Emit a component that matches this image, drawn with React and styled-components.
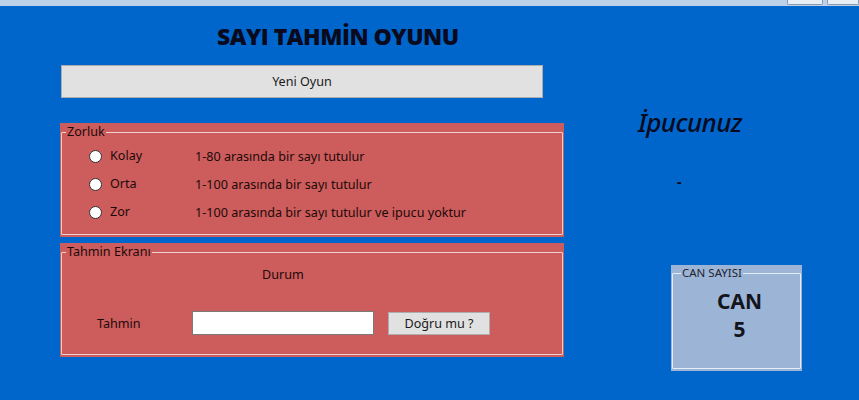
import styled, { createGlobalStyle } from 'styled-components';

const Global = createGlobalStyle`
  html, body { margin: 0; padding: 0; }
  body {
    background: #0066cc;
    font-family: "Noto Sans", "Open Sans", sans-serif;
    color: #1c0a0a;
    overflow: hidden;
  }
`;

const Window = styled.div`
  width: 859px;
  height: 400px;
  background: #0066cc;
`;

const Caption = styled.div`
  height: 6px;
  background: #bcd2ea;
  display: flex;
  justify-content: flex-end;
  gap: 4px;
`;

const CaptionButton = styled.div`
  width: ${p => p.w}px;
  height: 4px;
  border: 1px solid #8a9bb0;
  border-top: none;
  background: #e8eef6;
  border-radius: 0 0 2px 2px;
`;

const Body = styled.div`
  display: flex;
  padding-left: 60px;
`;

const LeftColumn = styled.div`
  width: 504px;
  display: flex;
  flex-direction: column;
`;

const Title = styled.h1`
  margin: 15px 0 0 157px;
  font-family: "Open Sans", sans-serif;
  font-size: 23px;
  font-weight: 800;
  letter-spacing: -0.5px;
  color: #0a0a1e;
  line-height: 30px;
`;

const WideButton = styled.button`
  margin: 14px 0 0 1px;
  width: 482px;
  height: 33px;
  background: #e1e1e1;
  border: 1px solid #adadad;
  font-family: "Noto Sans", sans-serif;
  font-size: 12.6px;
  color: #1a1a1a;
  padding: 0;
`;

const GroupPanel = styled.div`
  margin-top: ${p => p.top}px;
  background: ${p => p.bg};
  padding: 2px 1px 2px 1px;
`;

const Group = styled.fieldset`
  margin: 0;
  border: 1px solid ${p => p.line};
  border-radius: 1px;
  padding: ${p => p.pad};
  min-width: 0;
  height: ${p => p.h}px;
  box-sizing: border-box;
`;

const Legend = styled.legend`
  font-size: ${p => p.size || 12.6}px;
  line-height: 14px;
  padding: 0 1px;
  margin-left: ${p => p.indent || 4}px;
  color: ${p => p.color || '#1c0a0a'};
`;

const OptionGrid = styled.div`
  display: grid;
  grid-template-columns: 13px 77px auto;
  column-gap: 8px;
  grid-auto-rows: 28px;
  align-items: center;
  font-size: 12.6px;
  padding: 3px 0 0 27px;
`;

const Radio = styled.span`
  width: 13px;
  height: 13px;
  box-sizing: border-box;
  border-radius: 50%;
  background: #fff;
  border: 1px solid #333;
`;

const OptionLabel = styled.span`
  margin-top: -2px;
`;

const Status = styled.div`
  font-size: 12.6px;
  padding-left: 200px;
  line-height: 16px;
`;

const GuessRow = styled.div`
  display: flex;
  align-items: center;
  margin-top: 28px;
  font-size: 12.6px;
`;

const GuessLabel = styled.span`
  width: 130px;
  padding-left: 35px;
  box-sizing: border-box;
`;

const GuessInput = styled.input`
  width: 182px;
  height: 24px;
  box-sizing: border-box;
  border: 1px solid #7a7a7a;
  background: #fff;
  margin: 0;
`;

const SmallButton = styled.button`
  margin-left: 14px;
  width: 102px;
  height: 23px;
  background: #e1e1e1;
  border: 1px solid #adadad;
  font-family: "Noto Sans", sans-serif;
  font-size: 12.6px;
  color: #1a1a1a;
  padding: 0;
`;

const RightColumn = styled.div`
  display: flex;
  flex-direction: column;
  padding-left: 74px;
`;

const Hint = styled.div`
  margin-top: 100px;
  font-family: "Noto Sans", sans-serif;
  font-style: italic;
  font-weight: 500;
  font-size: 26px;
  letter-spacing: -0.6px;
  color: #0a0a1e;
  line-height: 32px;
`;

const HintValue = styled.div`
  margin: 36px 0 0 39px;
  font-size: 14px;
  font-weight: 700;
  line-height: 16px;
`;

const LifeBox = styled.div`
  margin: 75px 0 0 33px;
  width: 131px;
  background: #9cb5d6;
  padding: 1px 1px 2px 1px;
  box-sizing: border-box;
`;

const LifeText = styled.div`
  text-align: center;
  font-size: 21px;
  font-weight: 700;
  line-height: 28px;
  color: #14141c;
  padding-left: 6px;
`;

const options = [
  ['Kolay', '1-80 arasında bir sayı tutulur'],
  ['Orta', '1-100 arasında bir sayı tutulur'],
  ['Zor', '1-100 arasında bir sayı tutulur ve ipucu yoktur'],
];

export default function App() {
  return (
    <Window>
      <Global />
      <Caption>
        <CaptionButton w={34} />
        <CaptionButton w={30} />
      </Caption>
      <Body>
        <LeftColumn>
          <Title>SAYI TAHMİN OYUNU</Title>
          <WideButton>Yeni Oyun</WideButton>
          <GroupPanel top={25} bg="#cd5c5c">
            <Group line="#ecd2d2" pad="0" h={110}>
              <Legend>Zorluk</Legend>
              <OptionGrid>
                {options.map(([label, desc]) => [
                  <Radio key={label + 'r'} />,
                  <OptionLabel key={label}>{label}</OptionLabel>,
                  <span key={label + 'd'}>{desc}</span>,
                ])}
              </OptionGrid>
            </Group>
          </GroupPanel>
          <GroupPanel top={6} bg="#cd5c5c">
            <Group line="#ecd2d2" pad="8px 0 0 0" h={110}>
              <Legend>Tahmin Ekranı</Legend>
              <Status>Durum</Status>
              <GuessRow>
                <GuessLabel>Tahmin</GuessLabel>
                <GuessInput />
                <SmallButton>Doğru mu ?</SmallButton>
              </GuessRow>
            </Group>
          </GroupPanel>
        </LeftColumn>
        <RightColumn>
          <Hint>İpucunuz</Hint>
          <HintValue>-</HintValue>
          <LifeBox>
            <Group line="#e4ecf5" pad="7px 0 0 0" h={103}>
              <Legend size={11.5} indent={8} color="#1e2430">CAN SAYISI</Legend>
              <LifeText>CAN</LifeText>
              <LifeText>5</LifeText>
            </Group>
          </LifeBox>
        </RightColumn>
      </Body>
    </Window>
  );
}
